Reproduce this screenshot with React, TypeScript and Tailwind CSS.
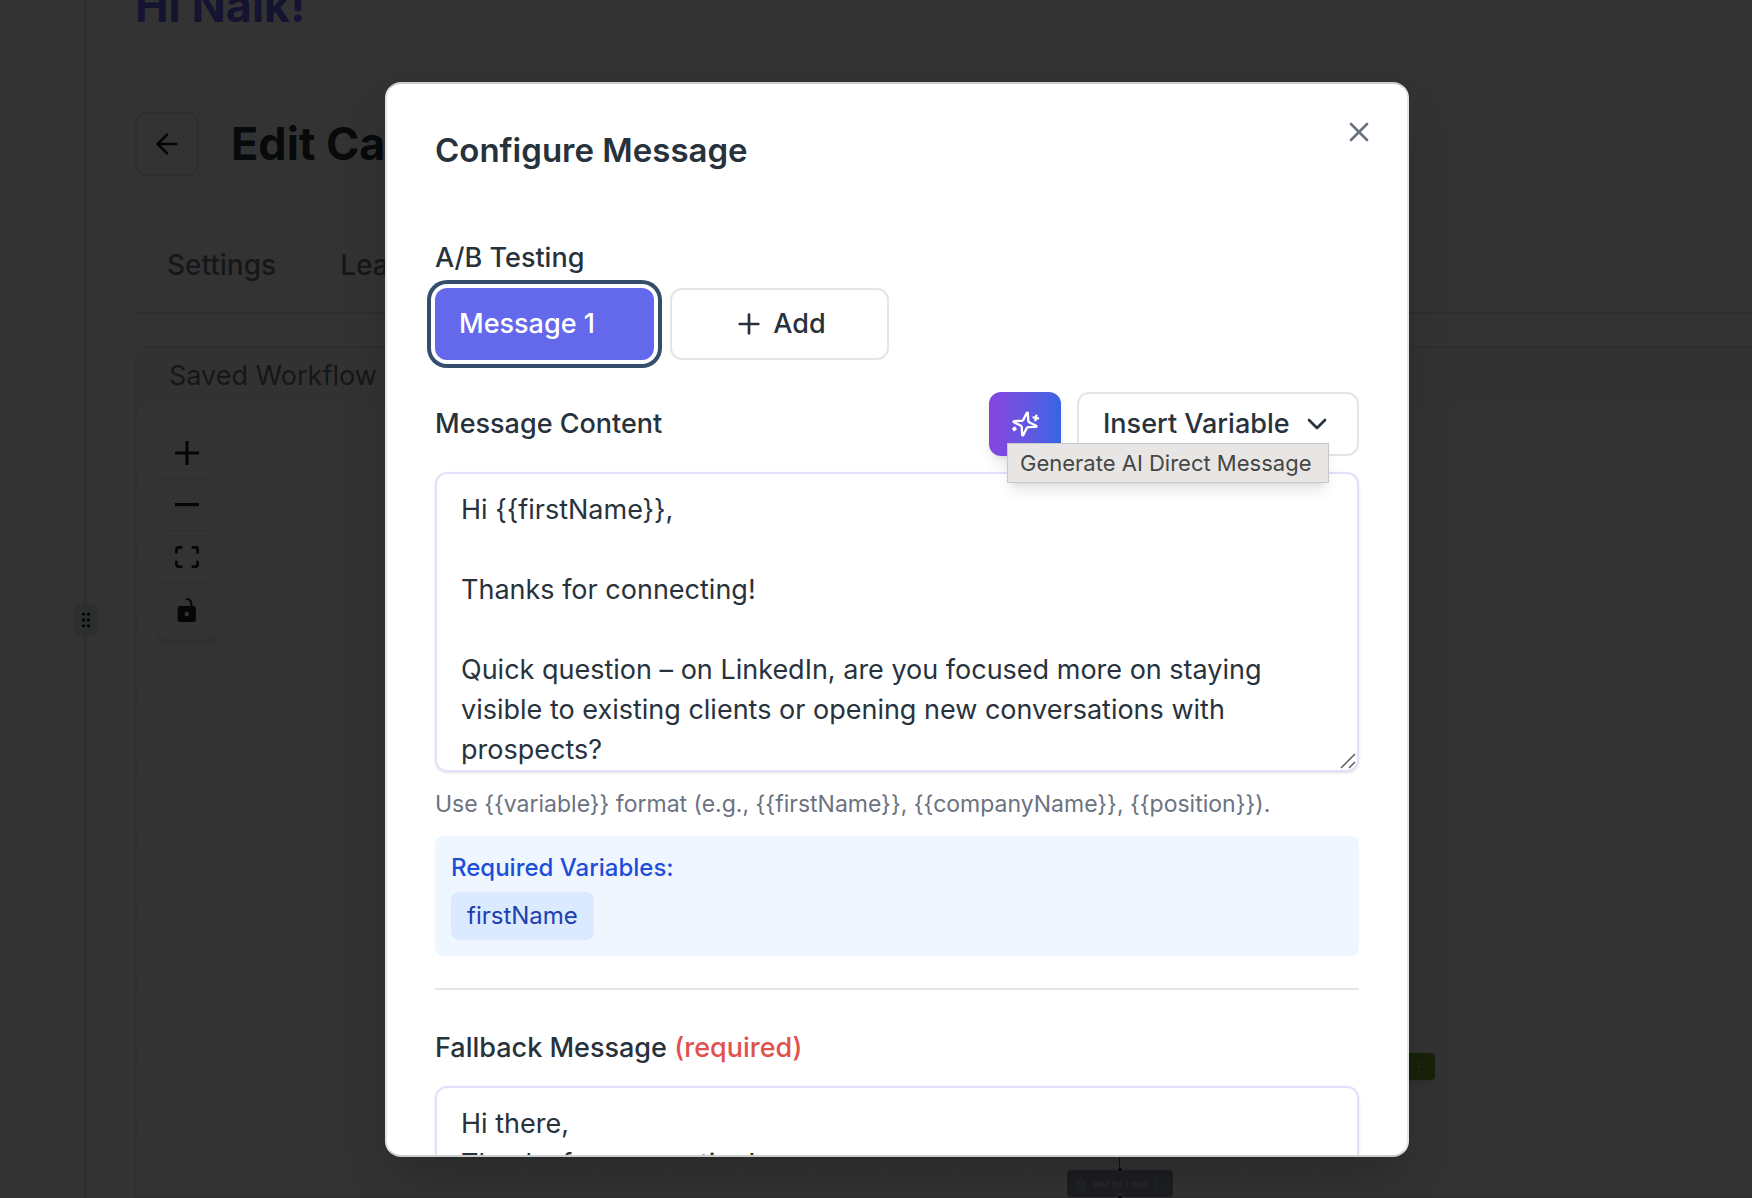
import { ArrowLeft, ChevronDown, GripVertical, Plus, X } from "lucide-react";

const MESSAGE = `Hi {{firstName}},

Thanks for connecting!

Quick question – on LinkedIn, are you focused more on staying visible to existing clients or opening new conversations with prospects?`;

const FALLBACK = `Hi there,
Thanks for connecting!`;

const REQUIRED_VARIABLES = ["firstName"];

const CONTROLS = [
  {
    label: "Zoom in",
    viewBox: "0 0 32 32",
    path: "M32 18.133H18.133V32h-4.266V18.133H0v-4.266h13.867V0h4.266v13.867H32z",
  },
  {
    label: "Zoom out",
    viewBox: "0 0 32 5",
    path: "M0 0h32v4.2H0z",
  },
  {
    label: "Fit view",
    viewBox: "0 0 32 30",
    path: "M3.692 4.63c0-.53.4-.938.939-.938h5.215V0H4.708C2.13 0 0 2.054 0 4.63v5.216h3.692V4.631zM27.354 0h-5.2v3.692h5.17c.53 0 .984.4.984.939v5.215H32V4.631A4.624 4.624 0 0027.354 0zm.954 24.83c0 .532-.4.94-.939.94h-5.215v3.768h5.215c2.577 0 4.631-2.13 4.631-4.707v-5.139h-3.692v5.139zm-23.677.94c-.531 0-.939-.4-.939-.94v-5.138H0v5.139c0 2.577 2.13 4.707 4.708 4.707h5.138V25.77H4.631z",
  },
  {
    label: "Toggle interactivity",
    viewBox: "0 0 25 32",
    path: "M21.333 10.667H19.81V7.619C19.81 3.429 16.38 0 12.19 0c-4.114 1.828-1.37 2.133.305 2.438 1.676.305 4.42 2.59 4.42 5.181v3.048H3.047A3.056 3.056 0 000 13.714v15.238A3.056 3.056 0 003.048 32h18.285a3.056 3.056 0 003.048-3.048V13.714a3.056 3.056 0 00-3.048-3.047zM12.19 24.533a3.056 3.056 0 01-3.047-3.047 3.056 3.056 0 013.047-3.048 3.056 3.056 0 013.048 3.048 3.056 3.056 0 01-3.048 3.047z",
  },
];

function SparklesIcon() {
  return (
    <svg
      viewBox="0 0 24 24"
      className="size-7 rotate-12"
      fill="none"
      stroke="currentColor"
      strokeWidth="2"
      strokeLinecap="round"
      strokeLinejoin="round"
    >
      <path d="M9.937 15.5A2 2 0 0 0 8.5 14.063l-6.135-1.582a.5.5 0 0 1 0-.962L8.5 9.936A2 2 0 0 0 9.937 8.5l1.582-6.135a.5.5 0 0 1 .963 0L14.063 8.5A2 2 0 0 0 15.5 9.937l6.135 1.581a.5.5 0 0 1 0 .964L15.5 14.063a2 2 0 0 0-1.437 1.437l-1.582 6.135a.5.5 0 0 1-.963 0z" />
      <path d="M20 3v4M22 5h-4M4 17v2M5 18H3" />
    </svg>
  );
}

function FlowControls() {
  return (
    <div className="flex w-[60px] flex-col rounded-xl bg-white p-1 shadow-md">
      {CONTROLS.map((control) => (
        <button
          key={control.label}
          type="button"
          aria-label={control.label}
          className="flex h-[52px] items-center justify-center border-b-2 border-[#eeeeee] last:border-b-0"
        >
          <svg viewBox={control.viewBox} className="max-h-6 w-6" fill="#1a202c">
            <path d={control.path} />
          </svg>
        </button>
      ))}
    </div>
  );
}

function NodeMenuIcon() {
  return (
    <svg viewBox="0 0 2 10" className="h-[10px] w-[2px]" fill="currentColor">
      <circle cx="1" cy="1" r="1" />
      <circle cx="1" cy="5" r="1" />
      <circle cx="1" cy="9" r="1" />
    </svg>
  );
}

function FlowNodes() {
  return (
    <>
      <div className="absolute top-[649px] left-[1198px] flex h-[27px] w-[100px] items-center justify-end rounded bg-[#7aa82e] pr-[15px] text-[#c4d6a0] shadow-md">
        <NodeMenuIcon />
      </div>
      <div className="absolute top-[740px] left-[982px] h-7 border-l border-[#555555]" />
      <div className="absolute top-[766px] left-[930px] flex h-[27px] w-[106px] items-center gap-[6px] rounded bg-[#9095a3] px-2 text-[8px] font-medium whitespace-nowrap text-[#d6d9e0]">
        <svg viewBox="0 0 12 12" className="size-3 shrink-0" fill="none" stroke="currentColor">
          <circle cx="6" cy="7" r="4" />
          <path d="M6 7l2-2M5 1h2M9 3l1-1" />
        </svg>
        Wait for 1 days
        <NodeMenuIcon />
        <span className="absolute -top-[3px] left-[50px] size-[6px] rounded-full border border-white bg-[#333333]" />
        <span className="absolute -bottom-[3px] left-[50px] size-[6px] rounded-full border border-white bg-[#333333]" />
      </div>
    </>
  );
}

function EditCampaign() {
  return (
    <div className="flex h-screen overflow-hidden bg-white">
      <aside className="relative w-[87px] shrink-0 border-r-4 border-[#e2eae6]">
        <div className="absolute top-[604px] -right-[15px] z-10 flex h-8 w-6 items-center justify-center rounded-lg bg-[#e2eae6]">
          <GripVertical className="size-5 text-[#111827]" />
        </div>
      </aside>
      <div className="flex min-w-0 grow flex-col">
        <header className="flex h-[62px] shrink-0 items-end border-b-2 border-[#f9f9f9] px-12 pb-[30px]">
          <p className="text-[45px] leading-[48px] font-bold text-[#6366f1]">Hi Naik!</p>
        </header>
        <main className="flex grow flex-col pt-[50px] pl-12">
          <div className="flex items-center gap-8">
            <button
              type="button"
              aria-label="Back"
              className="flex size-16 items-center justify-center rounded-xl border-2 border-[#e5e5e5]"
            >
              <ArrowLeft className="size-8 text-[#1a202c]" />
            </button>
            <h1 className="text-[45px] leading-[64px] font-bold text-[#28303a]">Edit Campaign</h1>
          </div>
          <nav className="mt-12 flex h-[90px] shrink-0 items-center gap-16 border-b-2 border-[#e5e5e5] px-8 pb-[6px] text-[28px] font-medium text-[#6b7280]">
            <button type="button">Settings</button>
            <button type="button">Leads</button>
          </nav>
          <section className="mt-8 flex grow flex-col rounded-tl-xl border-2 border-r-0 border-[#e9e9e9]">
            <h2 className="flex h-14 shrink-0 items-center border-b-2 border-[#f2f2f2] bg-[#fafafa] px-8 pt-[3px] text-[27px] text-[#6b7280]">
              Saved Workflow
            </h2>
            <div className="relative grow bg-[radial-gradient(#eeeeee_1px,transparent_1px)] bg-[length:9px_9px] px-5 py-5">
              <FlowControls />
              <FlowNodes />
            </div>
          </section>
        </main>
      </div>
    </div>
  );
}

function ConfigureMessageDialog() {
  return (
    <div
      role="dialog"
      aria-modal="true"
      aria-labelledby="dialog-title"
      className="relative h-full w-full max-w-[1024px] overflow-hidden rounded-2xl border-2 border-x-[#e3e5e6] border-y-[#cccdce] bg-white px-12 pt-[42px] text-[27px] leading-10 text-[#28323c] shadow-2xl"
    >
      <button type="button" aria-label="Close" className="absolute top-8 right-8 text-[#6b7280]">
        <X className="size-8" />
      </button>

      <h2 id="dialog-title" className="text-[33px] leading-[48px] font-semibold">
        Configure Message
      </h2>

      <div className="mt-16">
        <p className="font-medium">A/B Testing</p>
        <div className="mt-[10px] grid grid-cols-4 gap-4">
          <button
            type="button"
            className="h-[72px] rounded-xl bg-[#6369ea] px-6 text-left font-medium text-white ring-4 ring-[#354e6b] ring-offset-4"
          >
            Message 1
          </button>
          <button
            type="button"
            className="flex h-[72px] items-center justify-center gap-2 rounded-xl border-2 border-[#e5e5e5] font-medium"
          >
            <Plus className="size-8" />
            Add
          </button>
        </div>
      </div>

      <div className="mt-8 flex items-center justify-between">
        <label htmlFor="message" className="font-medium">
          Message Content
        </label>
        <div className="flex gap-4">
          <div className="relative">
            <button
              type="button"
              aria-label="Generate AI Direct Message"
              aria-describedby="ai-tooltip"
              className="flex h-16 w-[72px] items-center justify-center rounded-xl bg-linear-to-r from-[#8544df] to-[#3464e3] text-white shadow-lg"
            >
              <SparklesIcon />
            </button>
            <div
              id="ai-tooltip"
              role="tooltip"
              className="absolute top-[51px] left-[18px] z-10 flex h-10 w-[322px] items-center border border-[#c8c8c6] bg-[#e8e6e4] px-3 text-[22px] whitespace-nowrap text-[#464644] shadow-lg"
            >
              Generate AI Direct Message
            </div>
          </div>
          <button
            type="button"
            className="flex h-16 w-[282px] items-center justify-between rounded-xl border-2 border-[#e5e5e5] px-6 font-medium"
          >
            Insert Variable
            <ChevronDown className="size-8" />
          </button>
        </div>
      </div>

      <div className="relative mt-4">
        <textarea
          id="message"
          defaultValue={MESSAGE}
          className="block h-[300px] w-full resize-none overflow-hidden rounded-xl border-2 border-[#e0e2fa] px-6 py-4 shadow-sm"
        />
        <svg
          viewBox="0 0 16 16"
          className="pointer-events-none absolute right-[3px] bottom-[3px] size-4"
          fill="none"
          stroke="#5f5f5f"
          strokeWidth="1.5"
        >
          <path d="M1 15L15 1M9 15l6-6" />
        </svg>
      </div>
      <p className="mt-4 text-[23px] leading-8 text-[#6b7280]">
        {"Use {{variable}} format (e.g., {{firstName}}, {{companyName}}, {{position}})."}
      </p>

      <div className="mt-4 rounded-lg bg-[#eff6ff] p-4 text-2xl leading-8">
        <p className="font-medium text-[#1d4ed8]">Required Variables:</p>
        <ul className="mt-2 flex gap-2">
          {REQUIRED_VARIABLES.map((name) => (
            <li key={name} className="rounded-lg bg-[#dbeafe] px-4 py-2 text-[#1e40af]">
              {name}
            </li>
          ))}
        </ul>
      </div>

      <div className="mt-8 border-t-2 border-[#e5e5e5] pt-[38px]">
        <label htmlFor="fallback" className="font-medium">
          Fallback Message <span className="text-[#e0524d]">(required)</span>
        </label>
        <textarea
          id="fallback"
          defaultValue={FALLBACK}
          className="mt-[18px] block h-[240px] w-full resize-none overflow-hidden rounded-xl border-2 border-[#e0e2fa] px-6 py-4 shadow-sm"
        />
      </div>
    </div>
  );
}

export default function App() {
  return (
    <div className="relative h-screen overflow-hidden font-['Inter','Liberation_Sans',sans-serif]">
      <EditCampaign />
      <div className="absolute inset-0 z-20 flex justify-center bg-black/80 pt-[82px] pb-[41px] pl-[42px]">
        <ConfigureMessageDialog />
      </div>
    </div>
  );
}
